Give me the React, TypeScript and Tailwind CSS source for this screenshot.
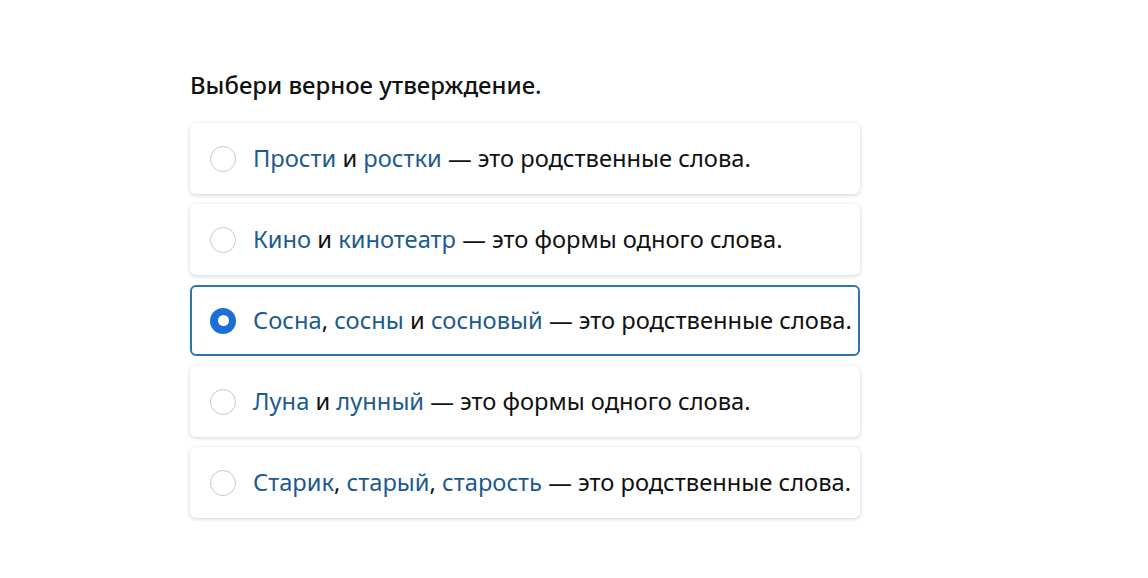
import React from "react";

type Part = { t: string; link?: boolean };

const options: Part[][] = [
  [{ t: "Прости", link: true }, { t: " и " }, { t: "ростки", link: true }, { t: " — это родственные слова." }],
  [{ t: "Кино", link: true }, { t: " и " }, { t: "кинотеатр", link: true }, { t: " — это формы одного слова." }],
  [{ t: "Сосна", link: true }, { t: ", " }, { t: "сосны", link: true }, { t: " и " }, { t: "сосновый", link: true }, { t: " — это родственные слова." }],
  [{ t: "Луна", link: true }, { t: " и " }, { t: "лунный", link: true }, { t: " — это формы одного слова." }],
  [{ t: "Старик", link: true }, { t: ", " }, { t: "старый", link: true }, { t: ", " }, { t: "старость", link: true }, { t: " — это родственные слова." }],
];

export default function App() {
  return (
    <div
      className="min-h-[578px] w-full bg-white pl-[190px] pt-[69px]"
      style={{ fontFamily: '"Noto Sans", "Open Sans", sans-serif' }}
    >
      <h1 className="text-[23.9px] font-medium leading-[32px] text-[#111]">Выбери верное утверждение.</h1>
      <div className="mt-[22px] flex w-[670px] flex-col gap-[10px]">
        {options.map((parts, i) => {
          const selected = i === 2;
          return (
            <div
              key={i}
              className={
                "flex h-[71px] items-center rounded-[6px] bg-white pl-[18px] " +
                (selected
                  ? "border-2 border-[#2f74ad]"
                  : "border-2 border-transparent shadow-[0_1px_4px_rgba(0,0,0,0.18)]")
              }
            >
              {selected ? (
                <span className="flex h-[26px] w-[26px] shrink-0 items-center justify-center rounded-full bg-[#1c6fd6]">
                  <span className="h-[11px] w-[11px] rounded-full bg-white" />
                </span>
              ) : (
                <span className="h-[26px] w-[26px] shrink-0 rounded-full border border-[#c8c8c8] bg-white" />
              )}
              <span className="ml-[17px] whitespace-nowrap pb-[2px] text-[23.7px] leading-[30px] text-[#111]">
                {parts.map((p, j) =>
                  p.link ? (
                    <span key={j} className="text-[#1d5a8f]">
                      {p.t}
                    </span>
                  ) : (
                    <span key={j}>{p.t}</span>
                  )
                )}
              </span>
            </div>
          );
        })}
      </div>
    </div>
  );
}
